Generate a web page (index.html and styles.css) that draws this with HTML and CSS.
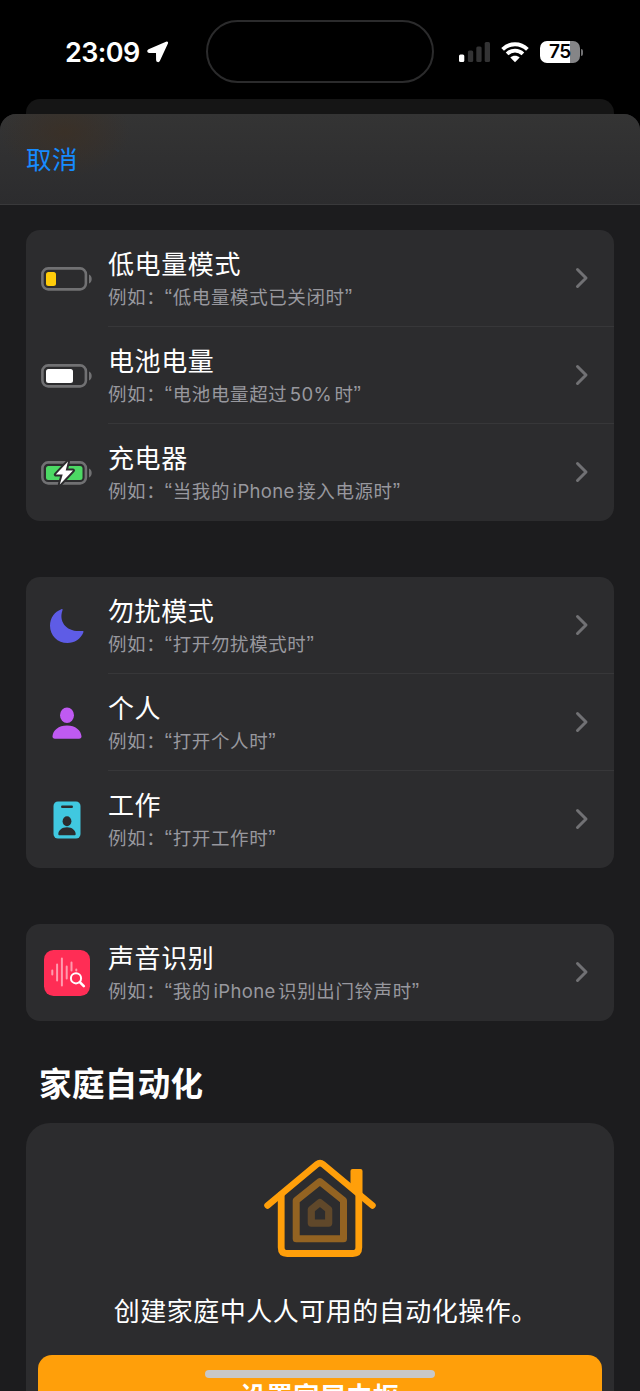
FILE: index.html
```html
<!DOCTYPE html>
<html lang="zh-CN">
<head>
<meta charset="utf-8">
<title>自动化</title>
<link rel="stylesheet" href="styles.css">
</head>
<body>
<div class="screen">
  <header class="status">
    <div class="clock">
      <span>23:09</span>
      <svg width="22" height="22" viewBox="0 0 22 22"><path d="M19.300 1.400 1.900 9C.5 9.700.9 11.200 2.200 11.200l7.600.1.1 7.700c0 1.500 1.700 1.800 2.300.5L20.200 2.200c.3-.7-.2-1.100-.9-.8Z" fill="#fff" stroke="#fff" stroke-width="1.600" stroke-linejoin="round"/></svg>
    </div>
    <div class="island"></div>
    <div class="indicators">
      <svg class="signal" width="32" height="21" viewBox="0 0 32 21"><rect x="0" y="12.500" width="5.300" height="7.500" rx="1.500" fill="#fff"/><g fill="#333334"><rect x="8.900" y="8.500" width="5.300" height="11.500" rx="1.500"/><rect x="17.300" y="4.500" width="5.300" height="15.500" rx="1.500"/><rect x="25.700" y="0" width="5.300" height="20" rx="1.500"/></g></svg>
      <svg class="wifi" width="28" height="21" viewBox="0 0 28 21"><g fill="none" stroke="#fff" stroke-width="3.900"><path d="M1.600 7.300C8.600.5 19.400.5 26.400 7.300"/><path d="M6.100 11.800c4.500-4.300 11.300-4.300 15.800 0"/></g><path d="m14 20.300-4.700-4.800c2.500-2.400 6.900-2.400 9.400 0Z" fill="#fff"/></svg>
      <div class="battery"><span>75</span></div>
      <i class="battery-cap"></i>
    </div>
  </header>

  <div class="sheet-behind"></div>
  <main class="sheet">
    <nav class="navbar"><a>取消</a></nav>

    <section class="group">
      <div class="row">
        <div class="icon"><svg class="cell" width="52" height="26" viewBox="0 0 52 26"><rect x="1.400" y="2.400" width="43.500" height="21" rx="5.800" class="shell"/><path d="M48 8.500c3.600 1.200 3.600 7.800 0 9Z" fill="#717173"/><rect x="5" y="6" width="10" height="14" rx="2.500" fill="#ffcc0a"/></svg></div>
        <div class="body"><div class="text"><h3>低电量模式</h3><p>例如：<q>低电量模式已关闭时</q></p></div><svg class="chevron" width="14" height="22" viewBox="0 0 14 22"><path d="m2.500 2.500 8.500 8.500-8.500 8.500"/></svg></div>
      </div>
      <div class="row">
        <div class="icon"><svg class="cell" width="52" height="26" viewBox="0 0 52 26"><rect x="1.400" y="2.400" width="43.500" height="21" rx="5.800" class="shell"/><path d="M48 8.500c3.600 1.200 3.600 7.800 0 9Z" fill="#717173"/><rect x="5" y="6" width="27" height="14" rx="2.500" fill="#fff"/></svg></div>
        <div class="body"><div class="text"><h3>电池电量</h3><p>例如：<q>电池电量超过<span class="latin">50%</span>时</q></p></div><svg class="chevron" width="14" height="22" viewBox="0 0 14 22"><path d="m2.500 2.500 8.500 8.500-8.500 8.500"/></svg></div>
      </div>
      <div class="row">
        <div class="icon"><svg class="cell" width="52" height="26" viewBox="0 0 52 26"><rect x="1.400" y="2.400" width="43.500" height="21" rx="5.800" class="shell"/><path d="M48 8.500c3.600 1.200 3.600 7.800 0 9Z" fill="#717173"/><rect x="5" y="6" width="36.500" height="14" rx="2.500" fill="#4cd964"/><path d="M27 1.500 14.800 14.600h6.900l-2.900 10 13.200-14.200h-7.300Z" fill="#fff" stroke="#2c2c2e" stroke-width="4" paint-order="stroke" stroke-linejoin="round"/></svg></div>
        <div class="body"><div class="text"><h3>充电器</h3><p>例如：<q>当我的<span class="latin">iPhone</span>接入电源时</q></p></div><svg class="chevron" width="14" height="22" viewBox="0 0 14 22"><path d="m2.500 2.500 8.500 8.500-8.500 8.500"/></svg></div>
      </div>
    </section>

    <section class="group">
      <div class="row">
        <div class="icon"><svg width="36" height="36" viewBox="0 0 36 36"><path d="M12.300 1.200c1-.4 1.500.1 1.200 1C9.300 13.500 17.500 24.700 33.300 22.900c1.100-.1 1.500.5 1.100 1.400C31.700 31.200 25.400 35.100 18.500 35.100 8.500 35.100 1 27.600 1 17.800 1 9.800 5.500 3.800 12.300 1.200Z" fill="#5e5ce6"/></svg></div>
        <div class="body"><div class="text"><h3>勿扰模式</h3><p>例如：<q>打开勿扰模式时</q></p></div><svg class="chevron" width="14" height="22" viewBox="0 0 14 22"><path d="m2.500 2.500 8.500 8.500-8.500 8.500"/></svg></div>
      </div>
      <div class="row">
        <div class="icon"><svg width="30" height="32" viewBox="0 0 30 32"><ellipse cx="15" cy="8.200" rx="7" ry="7.700" fill="#bf5af2"/><path d="M3 31.700c-1.700 0-2.600-.9-2.500-2.400C.9 23.400 6.600 18.500 15 18.500s14.100 4.900 14.500 10.800c.1 1.500-.8 2.400-2.500 2.400Z" fill="#bf5af2"/></svg></div>
        <div class="body"><div class="text"><h3>个人</h3><p>例如：<q>打开个人时</q></p></div><svg class="chevron" width="14" height="22" viewBox="0 0 14 22"><path d="m2.500 2.500 8.500 8.500-8.500 8.500"/></svg></div>
      </div>
      <div class="row">
        <div class="icon"><svg width="28" height="38" viewBox="0 0 28 38"><rect x=".5" y=".5" width="27" height="37" rx="4.500" fill="#40c8e0"/><g fill="#2c2c2e"><rect x="8" y="4.500" width="12" height="2.600" rx="1.300"/><ellipse cx="14" cy="20.200" rx="4.400" ry="5"/><path d="M6.800 34.200c-1 0-1.600-.5-1.500-1.300.3-3.700 3.700-6.600 8.700-6.600s8.400 2.900 8.700 6.600c.1.800-.5 1.300-1.500 1.300Z"/></g></svg></div>
        <div class="body"><div class="text"><h3>工作</h3><p>例如：<q>打开工作时</q></p></div><svg class="chevron" width="14" height="22" viewBox="0 0 14 22"><path d="m2.500 2.500 8.500 8.500-8.500 8.500"/></svg></div>
      </div>
    </section>

    <section class="group">
      <div class="row">
        <div class="icon"><svg width="48" height="48" viewBox="0 0 48 48"><rect x="1" y="1" width="46" height="46" rx="9.500" fill="#ff2d55"/><g stroke="#ff9aae" stroke-width="2" stroke-linecap="round"><path d="M9.300 21.500v4M14.100 15.500v16M18.900 9.500v27M23.700 17.500v12M28.500 13.500v8M33.300 20.500v1"/></g><circle cx="33" cy="29.300" r="5.100" fill="none" stroke="#fff" stroke-width="2"/><path d="m36.800 33.200 4 4" stroke="#fff" stroke-width="2.600" stroke-linecap="round"/></svg></div>
        <div class="body"><div class="text"><h3>声音识别</h3><p>例如：<q>我的<span class="latin">iPhone</span>识别出门铃声时</q></p></div><svg class="chevron" width="14" height="22" viewBox="0 0 14 22"><path d="m2.500 2.500 8.500 8.500-8.500 8.500"/></svg></div>
      </div>
    </section>

    <h2>家庭自动化</h2>
    <section class="home-card">
      <svg width="112" height="100" viewBox="0 0 112 100"><path d="M86.500 12q0-2 2-2h8q2 0 2 2v27l-12-10Z" fill="#ff9f0a"/><g fill="none" stroke-linecap="round" stroke-linejoin="round"><path d="M3.500 46.500 53 5.300q3-2.400 6 0l49.500 41.200" stroke="#ff9f0a" stroke-width="6.500"/><path d="M17.200 36v52.500q0 6 6 6h65.600q6 0 6-6V36" stroke="#ff9f0a" stroke-width="6.800"/><path d="M55.900 22.500 32.200 41.500v38.300h47.300V41.500Z" stroke="#936322" stroke-width="7"/><path d="M55.900 43.500 47.300 50.500v13.600h17.400V50.500Z" stroke="#60482a" stroke-width="7.200"/></g></svg>
      <p>创建家庭中人人可用的自动化操作。</p>
      <button>设置家居中枢</button>
    </section>
  </main>
  <div class="home-indicator"></div>
</div>
</body>
</html>
```
FILE: styles.css
```css
* { box-sizing: border-box; }
body {
  margin: 0;
  background: #000;
  color: #fff;
  font-family: Inter, "Noto Sans CJK SC", sans-serif;
}
h2, h3, p { margin: 0; }
svg { display: block; flex: none; overflow: visible; }
.screen {
  position: relative;
  width: 640px;
  height: 1391px;
  overflow: hidden;
  display: flex;
  flex-direction: column;
}
.status {
  height: 99px;
  flex: none;
  display: grid;
  grid-template-columns: 206px 228px 1fr;
  padding-top: 20px;
}
.clock {
  display: flex;
  align-items: center;
  height: 64px;
  padding-left: 65px;
  gap: 6px;
  font-size: 27px;
  font-weight: 600;
  letter-spacing: -.6px;
}
.clock span { width: 76px; white-space: nowrap; }
.island {
  height: 63px;
  border: 2px solid #2b2b2c;
  border-radius: 32px;
}
.indicators { display: flex; align-items: center; height: 64px; padding-left: 25px; }
.wifi { margin-left: 10px; }
.battery {
  width: 40px;
  height: 22px;
  margin-left: 11px;
  border-radius: 7px;
  background: linear-gradient(to right, #fff 30px, #858587 30px);
  color: #000;
  font-size: 19px;
  font-weight: 600;
  line-height: 22px;
  padding-left: 9px;
  letter-spacing: -0.4px;
}
.battery-cap { width: 2px; height: 7px; margin-left: 1px; border-radius: 0 2px 2px 0; background: #707072; }
.sheet-behind {
  height: 36px;
  flex: none;
  margin: 0 26px -20px;
  border-radius: 14px 14px 0 0;
  background: #151515;
}
.sheet {
  flex: 1;
  min-height: 0;
  margin-top: -1px;
  border-radius: 16px 16px 0 0;
  background: #1c1c1e;
  overflow: hidden;
  position: relative;
}
.navbar {
  height: 91px;
  padding: 0 0 4px 26px;
  display: flex;
  align-items: center;
  border-bottom: 1px solid #39393b;
  background:
    radial-gradient(ellipse 65px 45px at 65px 18px, #3d2f22b0, #3d2f2200),
    linear-gradient(#343434, #2c2c2e);
}
.navbar a { color: #168bff; font-size: 25.5px; letter-spacing: .5px; }
.group {
  margin: 25.400px 26px 0 25.500px;
  border-radius: 14px;
  background: #2c2c2e;
}
.group + .group { margin-top: 56px; }
.row { display: flex; height: 97px; }
.icon { width: 82.500px; flex: none; display: flex; align-items: center; justify-content: center; }
.shell { fill: none; stroke: #717173; stroke-width: 2.600px; }
.body { flex: 1; display: flex; align-items: center; justify-content: space-between; padding-right: 25px; }
.row:not(:last-child) .body { box-shadow: inset 0 -1px #373739; }
.text { display: flex; flex-direction: column; gap: 2px; white-space: nowrap; padding-top: 1px; }
h3 { font-size: 26px; line-height: 34px; font-weight: 400; letter-spacing: .6px; }
.text p { color: #98989e; font-size: 18.500px; line-height: 26px; letter-spacing: .6px; }
q { quotes: "“" "”"; }
q::before, q::after { font-family: "Liberation Sans", sans-serif; font-size: 22px; line-height: 1; }
q::before { margin-left: -.5px; }
.latin { margin: 0 2.500px; letter-spacing: .35px; }
.chevron { fill: none; stroke: #717174; stroke-width: 3px; stroke-linecap: round; stroke-linejoin: round; margin-bottom: 1px; }
h2 { padding-left: 39px; margin-top: 40px; font-size: 32.500px; line-height: 48px; letter-spacing: .4px; font-weight: 700; }
.home-card {
  margin: 13.500px 26px 0 25.500px;
  padding: 36px 12.500px 0;
  border-radius: 24px 24px 0 0;
  background: #2c2c2e;
  height: 300px;
  display: flex;
  flex-direction: column;
  align-items: center;
}
.home-card p { margin: 35px 0 0 12px; font-size: 26px; line-height: 36px; letter-spacing: .5px; white-space: nowrap; }
.home-card button {
  width: 100%;
  height: 82px;
  margin-top: 25px;
  border: 0;
  border-radius: 14px;
  background: #ff9f0a;
  color: #fff;
  font: 700 26px/84px Inter, "Noto Sans CJK SC", sans-serif;
  letter-spacing: .5px;
  padding: 0;
}
.home-indicator {
  position: absolute;
  left: 205px;
  bottom: 13px;
  width: 230px;
  height: 8px;
  border-radius: 4px;
  background: #c8c8c8;
}
```
